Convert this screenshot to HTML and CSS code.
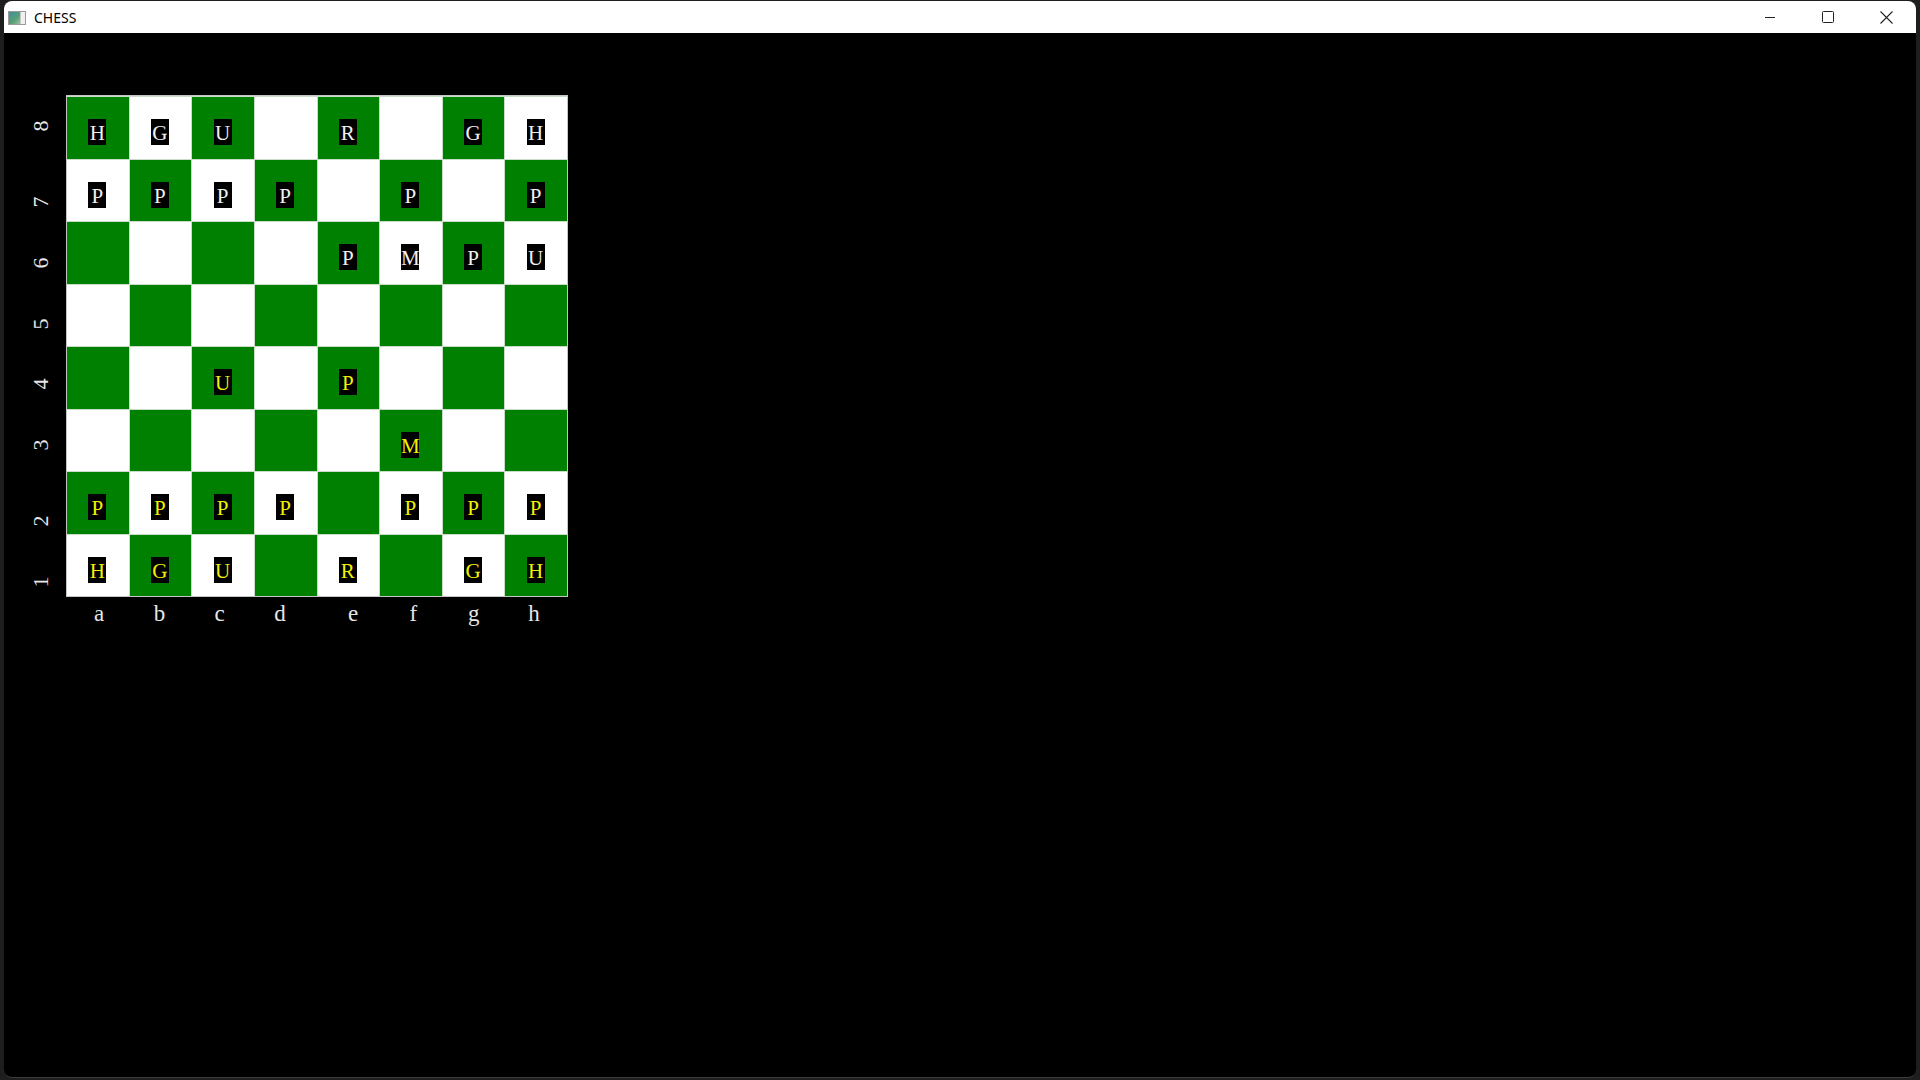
FILE: index.html
```html
<!DOCTYPE html>
<html>
<head>
<meta charset="utf-8">
<title>CHESS</title>
<link rel="stylesheet" href="styles.css">
</head>
<body>
<div class="window">
  <div class="titlebar">
    <div class="app-icon"><span class="ic-left"></span><span class="ic-right"></span></div>
    <div class="title">CHESS</div>
    <div class="controls">
      <div class="ctl"><svg width="12" height="12" viewBox="0 0 12 12"><path d="M1 6.5h10" stroke="#222" stroke-width="1"/></svg></div>
      <div class="ctl"><svg width="12" height="12" viewBox="0 0 12 12"><rect x="0.5" y="0.5" width="11" height="11" rx="1" fill="none" stroke="#222" stroke-width="1"/></svg></div>
      <div class="ctl"><svg width="13" height="13" viewBox="0 0 13 13"><path d="M0.5 0.5L12.5 12.5M12.5 0.5L0.5 12.5" stroke="#222" stroke-width="1.1"/></svg></div>
    </div>
  </div>
  <div class="content">
    <div class="ranks">
      <div class="rank"><span>8</span></div>
      <div class="rank jump"><span>7</span></div>
      <div class="rank"><span>6</span></div>
      <div class="rank"><span>5</span></div>
      <div class="rank"><span>4</span></div>
      <div class="rank"><span>3</span></div>
      <div class="rank jump"><span>2</span></div>
      <div class="rank"><span>1</span></div>
    </div>
    <div class="board">
      <!-- rank 8 -->
      <div class="sq g"><span class="pc w">H</span></div>
      <div class="sq l"><span class="pc w">G</span></div>
      <div class="sq g"><span class="pc w">U</span></div>
      <div class="sq l"></div>
      <div class="sq g"><span class="pc w">R</span></div>
      <div class="sq l"></div>
      <div class="sq g"><span class="pc w">G</span></div>
      <div class="sq l"><span class="pc w">H</span></div>
      <!-- rank 7 -->
      <div class="sq l"><span class="pc w">P</span></div>
      <div class="sq g"><span class="pc w">P</span></div>
      <div class="sq l"><span class="pc w">P</span></div>
      <div class="sq g"><span class="pc w">P</span></div>
      <div class="sq l"></div>
      <div class="sq g"><span class="pc w">P</span></div>
      <div class="sq l"></div>
      <div class="sq g"><span class="pc w">P</span></div>
      <!-- rank 6 -->
      <div class="sq g"></div>
      <div class="sq l"></div>
      <div class="sq g"></div>
      <div class="sq l"></div>
      <div class="sq g"><span class="pc w">P</span></div>
      <div class="sq l"><span class="pc w">M</span></div>
      <div class="sq g"><span class="pc w">P</span></div>
      <div class="sq l"><span class="pc w">U</span></div>
      <!-- rank 5 -->
      <div class="sq l"></div>
      <div class="sq g"></div>
      <div class="sq l"></div>
      <div class="sq g"></div>
      <div class="sq l"></div>
      <div class="sq g"></div>
      <div class="sq l"></div>
      <div class="sq g"></div>
      <!-- rank 4 -->
      <div class="sq g"></div>
      <div class="sq l"></div>
      <div class="sq g"><span class="pc y">U</span></div>
      <div class="sq l"></div>
      <div class="sq g"><span class="pc y">P</span></div>
      <div class="sq l"></div>
      <div class="sq g"></div>
      <div class="sq l"></div>
      <!-- rank 3 -->
      <div class="sq l"></div>
      <div class="sq g"></div>
      <div class="sq l"></div>
      <div class="sq g"></div>
      <div class="sq l"></div>
      <div class="sq g"><span class="pc y">M</span></div>
      <div class="sq l"></div>
      <div class="sq g"></div>
      <!-- rank 2 -->
      <div class="sq g"><span class="pc y">P</span></div>
      <div class="sq l"><span class="pc y">P</span></div>
      <div class="sq g"><span class="pc y">P</span></div>
      <div class="sq l"><span class="pc y">P</span></div>
      <div class="sq g"></div>
      <div class="sq l"><span class="pc y">P</span></div>
      <div class="sq g"><span class="pc y">P</span></div>
      <div class="sq l"><span class="pc y">P</span></div>
      <!-- rank 1 -->
      <div class="sq l"><span class="pc y">H</span></div>
      <div class="sq g"><span class="pc y">G</span></div>
      <div class="sq l"><span class="pc y">U</span></div>
      <div class="sq g"></div>
      <div class="sq l"><span class="pc y">R</span></div>
      <div class="sq g"></div>
      <div class="sq l"><span class="pc y">G</span></div>
      <div class="sq g"><span class="pc y">H</span></div>
    </div>
    <div class="corner"></div>
    <div class="files">
      <div class="file">a</div>
      <div class="file">b</div>
      <div class="file">c</div>
      <div class="file">d</div>
      <div class="file jump">e</div>
      <div class="file">f</div>
      <div class="file">g</div>
      <div class="file">h</div>
    </div>
  </div>
</div>
</body>
</html>
```
FILE: styles.css
```css
* { box-sizing: border-box; }
html, body {
  margin: 0;
  padding: 0;
  width: 1920px;
  height: 1080px;
  overflow: hidden;
  background: #1e1e1e;
}
body {
  padding: 1px 4px 0 4px;
}
.window {
  width: 1912px;
  height: 1077px;
  background: #000;
  border-radius: 8px;
  border-bottom: 1px solid #3c3c3c;
  display: flex;
  flex-direction: column;
  overflow: hidden;
}
.titlebar {
  height: 32px;
  background: #fff;
  display: flex;
  align-items: center;
  flex: none;
}
.app-icon {
  width: 18px;
  height: 14px;
  margin-left: 4px;
  margin-top: 1px;
  border: 1px solid #9a9a9a;
  display: flex;
  background: #e6e6e6;
}
.ic-left {
  width: 11px;
  background: linear-gradient(135deg, #3f8fa8, #58a070 60%, #9cc0b0);
}
.ic-right {
  flex: 1;
  background: #f0f0f0;
  border-left: 1px solid #c8c8c8;
}
.title {
  margin-left: 8px;
  font-family: "Noto Sans", "Open Sans", sans-serif;
  font-size: 14px;
  color: #000;
  margin-top: 1px;
}
.controls {
  margin-left: auto;
  display: flex;
  height: 32px;
  margin-right: 1px;
}
.ctl {
  width: 58px;
  height: 32px;
  display: flex;
  align-items: center;
  justify-content: center;
}
.content {
  flex: 1;
  display: grid;
  grid-template-columns: 28px 502px;
  grid-template-rows: 502px 34px;
  column-gap: 12px;
  padding: 62px 0 0 22px;
  align-content: start;
}
.ranks {
  padding-top: 1px;
  display: flex;
  flex-direction: column;
}
.rank {
  height: 60.75px;
  flex: none;
  display: flex;
  align-items: center;
  justify-content: center;
  font-family: "Liberation Serif", "Times New Roman", serif;
  font-size: 22px;
  color: #e6e6e6;
}
.rank.jump { margin-top: 15px; }
.rank span {
  display: block;
  transform: rotate(-90deg);
  line-height: 22px;
}
.board {
  border: 1px solid #c4c4c4;
  background: #c8dcc8;
  display: grid;
  grid-template-columns: repeat(8, 1fr);
  grid-template-rows: repeat(8, 1fr);
  gap: 1px;
  padding: 1px 0 0 0;
}
.sq {
  display: flex;
  justify-content: center;
  align-items: flex-start;
  padding-top: 22px;
  padding-right: 1px;
}
.sq.g { background: #008000; }
.sq.l { background: #ffffff; }
.pc {
  display: flex;
  justify-content: center;
  width: 18px;
  height: 26px;
  background: #000;
  font-family: "Liberation Serif", "Times New Roman", serif;
  font-size: 21px;
  line-height: 28px;
}
.pc.w { color: #f0f0f0; }
.pc.y { color: #f2f200; }
.files {
  display: flex;
  padding-left: 3px;
  padding-top: 2px;
}
.file {
  width: 60.25px;
  flex: none;
  height: 30px;
  line-height: 30px;
  text-align: center;
  font-family: "Liberation Serif", "Times New Roman", serif;
  font-size: 23px;
  color: #e6e6e6;
}
.file.jump { margin-left: 13px; }
```
